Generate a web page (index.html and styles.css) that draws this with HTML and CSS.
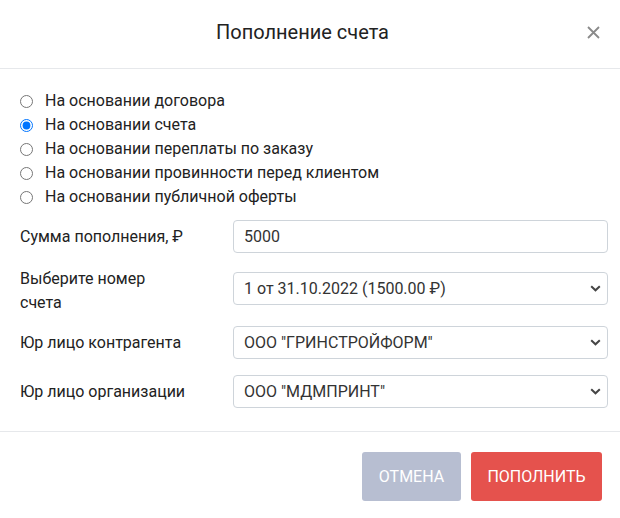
FILE: index.html
```html
<!DOCTYPE html>
<html lang="ru">
<head>
<meta charset="utf-8">
<link rel="stylesheet" href="styles.css">
</head>
<body>
<div class="modal">
  <div class="modal-header">
    <div class="modal-title">Пополнение счета</div>
    <button class="close" type="button" aria-label="Закрыть">
      <svg width="13" height="13" viewBox="0 0 13 13"><path d="M1 1L12 12M12 1L1 12" stroke="#8a8a8a" stroke-width="1.8" fill="none"/></svg>
    </button>
  </div>
  <div class="modal-body">
    <div class="radios">
      <label class="radio"><input type="radio" name="basis"><span>На основании договора</span></label>
      <label class="radio"><input type="radio" name="basis" checked><span>На основании счета</span></label>
      <label class="radio"><input type="radio" name="basis"><span>На основании переплаты по заказу</span></label>
      <label class="radio"><input type="radio" name="basis"><span>На основании провинности перед клиентом</span></label>
      <label class="radio"><input type="radio" name="basis"><span>На основании публичной оферты</span></label>
    </div>
    <div class="row row-sum">
      <div class="label">Сумма пополнения, ₽</div>
      <div class="control"><div class="input">5000</div></div>
    </div>
    <div class="row row-invoice">
      <div class="label">Выберите номер<br>счета</div>
      <div class="control"><div class="select"><span>1 от 31.10.2022 (1500.00 ₽)</span><svg class="chev" width="11" height="7" viewBox="0 0 11 7"><path d="M1.2 1.2L5.5 5.3L9.8 1.2" stroke="#454545" stroke-width="2" fill="none"/></svg></div></div>
    </div>
    <div class="row row-contr">
      <div class="label">Юр лицо контрагента</div>
      <div class="control"><div class="select"><span>ООО "ГРИНСТРОЙФОРМ"</span><svg class="chev" width="11" height="7" viewBox="0 0 11 7"><path d="M1.2 1.2L5.5 5.3L9.8 1.2" stroke="#454545" stroke-width="2" fill="none"/></svg></div></div>
    </div>
    <div class="row row-org">
      <div class="label">Юр лицо организации</div>
      <div class="control"><div class="select"><span>ООО "МДМПРИНТ"</span><svg class="chev" width="11" height="7" viewBox="0 0 11 7"><path d="M1.2 1.2L5.5 5.3L9.8 1.2" stroke="#454545" stroke-width="2" fill="none"/></svg></div></div>
    </div>
  </div>
  <div class="modal-footer">
    <button class="btn btn-cancel" type="button">Отмена</button>
    <button class="btn btn-primary" type="button">Пополнить</button>
  </div>
</div>
</body>
</html>
```
FILE: styles.css
```css
* { box-sizing: border-box; }
html, body { margin: 0; padding: 0; background: #fff; }
body {
  font-family: Roboto, "Liberation Sans", Arial, sans-serif;
  color: #222;
  font-size: 16px;
}
.modal { width: 620px; }
.modal-header {
  display: flex;
  align-items: center;
  height: 69px;
  padding: 0 19px 4px 20px;
  border-bottom: 1px solid #e6e8eb;
}
.modal-title {
  flex: 1;
  text-align: center;
  font-size: 20px;
  color: #222;
}
.close {
  border: 0;
  background: none;
  padding: 0;
  width: 16px;
  height: 16px;
  display: flex;
  align-items: center;
  justify-content: center;
  cursor: pointer;
}
.modal-body {
  padding: 20px 12px 23px 20px;
}
.radios { display: flex; flex-direction: column; }
.radio {
  display: flex;
  align-items: center;
  height: 24px;
  line-height: 24px;
  color: #222;
}
.radio input {
  margin: 0 12px 0 0;
  width: 13px;
  height: 13px;
}
.row {
  display: flex;
  align-items: center;
}
.row-sum { margin-top: 11px; }
.row-invoice { margin-top: 14px; }
.row-contr { margin-top: 11px; }
.row-org { margin-top: 16px; }
.label {
  width: 213px;
  line-height: 24px;
  color: #222;
}
.control { flex: 1; }
.input, .select {
  height: 33px;
  border: 1px solid #ced4da;
  border-radius: 4px;
  padding: 0 10px;
  display: flex;
  align-items: center;
  font-size: 16px;
  color: #333;
}
.select { justify-content: space-between; padding-right: 6px; }
.row-invoice .control { margin-top: -6px; }
.chev { display: block; }
.modal-footer {
  border-top: 1px solid #e6e8eb;
  display: flex;
  justify-content: flex-end;
  gap: 10px;
  padding: 20px 18px 0 0;
}
.btn {
  border: 0;
  border-radius: 3px;
  height: 49px;
  padding: 0 10px;
  font-family: Roboto, "Liberation Sans", Arial, sans-serif;
  font-size: 16px;
  text-transform: uppercase;
  color: #fff;
}
.btn-cancel { background: #b7bed1; width: 99px; }
.btn-primary { background: #e5524d; width: 131px; }
```
